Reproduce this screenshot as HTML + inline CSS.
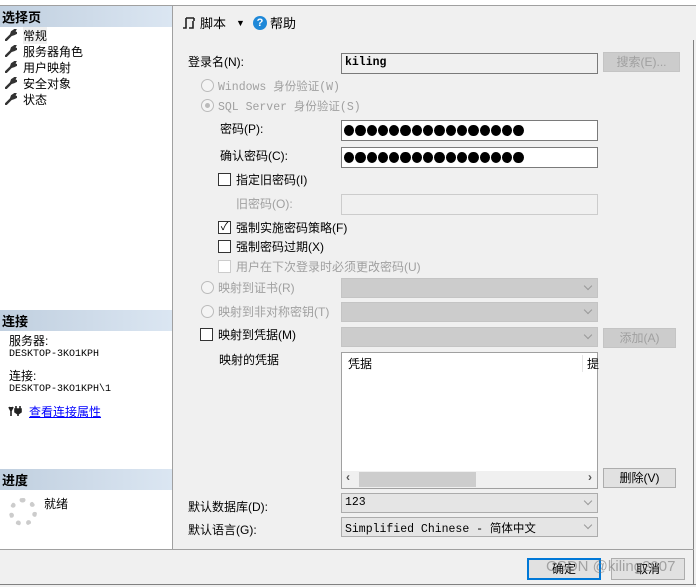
<!DOCTYPE html>
<html><head><meta charset="utf-8"><style>
*{box-sizing:border-box;margin:0;padding:0}
body{width:696px;height:587px;background:#f0f0f0;font:12px "Liberation Sans","Noto Sans CJK SC",sans-serif;color:#000;position:relative;overflow:hidden}
.a{position:absolute;white-space:nowrap}
.m{font-family:"Liberation Mono","Noto Sans CJK SC",monospace;font-size:11.5px}
.hd{position:absolute;left:0;width:172px;height:21px;background:linear-gradient(90deg,#c0cfdf,#dbe6f2);font-weight:bold;font-size:13px;padding:1px 0 0 2px}
.in{position:absolute;left:341px;width:257px;height:21px;border:1px solid #7a7a7a;background:#fff}
.dis{color:#a0a0a0}
.cb{position:absolute;width:13px;height:13px;border:1px solid #333;background:#fff}
.rd{position:absolute;width:13px;height:13px;border:1px solid #bbb;border-radius:50%;background:#f4f4f4}
.combo{position:absolute;left:341px;width:257px;height:20px;background:#cccccc;border:1px solid #c4c4c4}
.combo:after{content:"";position:absolute;right:6px;top:4px;width:5px;height:5px;border-right:1px solid #999;border-bottom:1px solid #999;transform:rotate(45deg)}
.btn{position:absolute;height:20px;border:1px solid #c4c4c4;background:#cccccc;color:#a0a0a0;text-align:center;line-height:18px}
.dots{padding:4px 0 0 2px;display:flex;gap:1px}
.dots i{display:block;width:10.3px;height:11px;border-radius:50%;background:#000}
.nav div{height:16px;display:flex;align-items:center}
.nav svg{margin-right:6px}
</style></head><body>
<div class="a" style="left:0;top:0;width:696px;height:5px;background:#fff"></div>
<div class="a" style="left:0;top:5px;width:696px;height:1px;background:#a0a0a0"></div>
<div class="a" style="left:0;top:6px;width:172px;height:543px;background:#fff"></div>
<div class="a" style="left:172px;top:6px;width:1px;height:543px;background:#a0a0a0"></div>
<div class="a" style="left:693px;top:40px;width:1px;height:545px;background:#808080"></div>
<div class="a" style="left:0;top:549px;width:694px;height:1px;background:#a0a0a0"></div>
<div class="a" style="left:0;top:584px;width:696px;height:1px;background:#808080"></div>

<div class="hd" style="top:6px">选择页</div>
<div class="a nav" style="left:5px;top:27px">
<div><svg width="12" height="12" viewBox="0 0 12 12"><path d="M1 11 L6 6 M6 6 L7 3 L10 1 L9 3 L11 4 L9 5 L6 6" stroke="#333" stroke-width="2.4" fill="#333" stroke-linecap="round"/></svg><span style="background:#f0f0f0">常规</span></div>
<div><svg width="12" height="12" viewBox="0 0 12 12"><path d="M1 11 L6 6 M6 6 L7 3 L10 1 L9 3 L11 4 L9 5 L6 6" stroke="#333" stroke-width="2.4" fill="#333" stroke-linecap="round"/></svg>服务器角色</div>
<div><svg width="12" height="12" viewBox="0 0 12 12"><path d="M1 11 L6 6 M6 6 L7 3 L10 1 L9 3 L11 4 L9 5 L6 6" stroke="#333" stroke-width="2.4" fill="#333" stroke-linecap="round"/></svg>用户映射</div>
<div><svg width="12" height="12" viewBox="0 0 12 12"><path d="M1 11 L6 6 M6 6 L7 3 L10 1 L9 3 L11 4 L9 5 L6 6" stroke="#333" stroke-width="2.4" fill="#333" stroke-linecap="round"/></svg>安全对象</div>
<div><svg width="12" height="12" viewBox="0 0 12 12"><path d="M1 11 L6 6 M6 6 L7 3 L10 1 L9 3 L11 4 L9 5 L6 6" stroke="#333" stroke-width="2.4" fill="#333" stroke-linecap="round"/></svg>状态</div>
</div>

<div class="hd" style="top:310px">连接</div>
<div class="a" style="left:9px;top:336px;line-height:11px">服务器:<br><span class="m" style="font-size:10px">DESKTOP-3KO1KPH</span></div>
<div class="a" style="left:9px;top:371px;line-height:11px">连接:<br><span class="m" style="font-size:10px">DESKTOP-3KO1KPH\1</span></div>
<svg class="a" style="left:8px;top:405px" width="14" height="11" viewBox="0 0 14 11"><path d="M1 2 L3 6 L5 2 M3 6 V11 M8 1 V4 M12 1 V4 M7 4 H13 V7 L10 9 L7 7 Z M10 9 V11" stroke="#222" stroke-width="1.6" fill="#222"/></svg>
<div class="a" style="left:29px;top:403px;color:#00f;text-decoration:underline">查看连接属性</div>

<div class="hd" style="top:469px">进度</div>
<div class="a" style="left:9px;top:498px;width:28px;height:28px;border-radius:50%;border:5px dotted #ccc"></div>
<div class="a" style="left:44px;top:495px">就绪</div>

<div class="a" style="left:182px;top:13px;font-size:13px;display:flex;align-items:center">
<svg width="14" height="14" viewBox="0 0 14 14"><path d="M4 2 H12 M4 2 V12 H1 M12 2 V5 M7 12 H11 V5" stroke="#222" stroke-width="1.6" fill="none"/></svg>
<span style="margin-left:4px">脚本</span><span style="margin-left:10px;font-size:9px">▼</span>
<span style="margin-left:8px;display:inline-block;width:14px;height:14px;border-radius:50%;background:#1e88d8;color:#fff;font-weight:bold;font-size:11px;text-align:center;line-height:14px">?</span><span style="margin-left:3px">帮助</span></div>

<div class="a" style="left:188px;top:53px">登录名(N):</div>
<div class="in" style="top:53px;background:#f0f0f0"><span class="m" style="position:absolute;left:3px;top:2px;font-weight:bold">kiling</span></div>
<div class="btn" style="left:603px;top:52px;width:77px">搜索(E)...</div>

<div class="rd" style="left:201px;top:79px"></div><div class="a dis m" style="left:218px;top:78px">Windows 身份验证(W)</div>
<div class="rd" style="left:201px;top:99px"><div style="position:absolute;left:3px;top:3px;width:5px;height:5px;border-radius:50%;background:#bbb"></div></div><div class="a dis m" style="left:218px;top:98px">SQL Server 身份验证(S)</div>

<div class="a" style="left:220px;top:120px">密码(P):</div>
<div class="in dots" style="top:120px"><i></i><i></i><i></i><i></i><i></i><i></i><i></i><i></i><i></i><i></i><i></i><i></i><i></i><i></i><i></i><i></i></div>
<div class="a" style="left:220px;top:147px">确认密码(C):</div>
<div class="in dots" style="top:147px"><i></i><i></i><i></i><i></i><i></i><i></i><i></i><i></i><i></i><i></i><i></i><i></i><i></i><i></i><i></i><i></i></div>

<div class="cb" style="left:218px;top:173px"></div><div class="a" style="left:236px;top:171px">指定旧密码(I)</div>
<div class="a dis" style="left:236px;top:195px">旧密码(O):</div>
<div class="in" style="top:194px;border-color:#ccc;background:#f0f0f0"></div>
<div class="cb" style="left:218px;top:221px;font-size:11px;line-height:11px;text-align:center">✓</div><div class="a" style="left:236px;top:219px">强制实施密码策略(F)</div>
<div class="cb" style="left:218px;top:240px"></div><div class="a" style="left:236px;top:238px">强制密码过期(X)</div>
<div class="cb" style="left:218px;top:260px;border-color:#ccc"></div><div class="a dis" style="left:236px;top:258px">用户在下次登录时必须更改密码(U)</div>

<div class="rd" style="left:201px;top:281px"></div><div class="a dis" style="left:218px;top:279px">映射到证书(R)</div>
<div class="combo" style="top:278px"></div>
<div class="rd" style="left:201px;top:305px"></div><div class="a dis" style="left:218px;top:303px">映射到非对称密钥(T)</div>
<div class="combo" style="top:302px"></div>
<div class="cb" style="left:200px;top:328px"></div><div class="a" style="left:218px;top:326px">映射到凭据(M)</div>
<div class="combo" style="top:327px"></div>
<div class="btn" style="left:603px;top:328px;width:73px">添加(A)</div>

<div class="a" style="left:219px;top:351px">映射的凭据</div>
<div class="a" style="left:341px;top:352px;width:257px;height:137px;border:1px solid #a0a0a0;background:#fff">
<div class="a" style="left:6px;top:2px">凭据</div>
<div class="a" style="left:240px;top:2px;width:1px;height:17px;background:#e5e5e5"></div>
<div class="a" style="left:245px;top:2px">提</div>
<div class="a" style="left:0;top:118px;width:255px;height:17px;background:#f0f0f0"></div>
<div class="a" style="left:17px;top:119px;width:117px;height:15px;background:#cdcdcd"></div>
<div class="a" style="left:4px;top:117px;color:#555;font-weight:bold">‹</div>
<div class="a" style="left:246px;top:117px;color:#555;font-weight:bold">›</div>
</div>
<div class="btn" style="left:603px;top:468px;width:73px;color:#000;background:#e1e1e1;border-color:#adadad">删除(V)</div>

<div class="a" style="left:188px;top:498px">默认数据库(D):</div>
<div class="combo" style="top:493px;background:#e5e5e5;border-color:#acacac"><span class="m" style="position:absolute;left:3px;top:2px">123</span></div>
<div class="a" style="left:188px;top:521px">默认语言(G):</div>
<div class="combo" style="top:517px;background:#e5e5e5;border-color:#acacac"><span class="m" style="position:absolute;left:3px;top:2px">Simplified Chinese - 简体中文</span></div>

<div class="a" style="left:527px;top:558px;width:74px;height:22px;border:2px solid #0078d7;background:#e1e1e1;text-align:center;line-height:18px">确定</div>
<div class="a" style="left:611px;top:558px;width:74px;height:22px;border:1px solid #adadad;background:#e1e1e1;text-align:center;line-height:20px">取消</div>
<div class="a" style="left:546px;top:558px;font-size:15px;color:rgba(120,120,120,.6)">CSDN @kiling2007</div>
</body></html>
